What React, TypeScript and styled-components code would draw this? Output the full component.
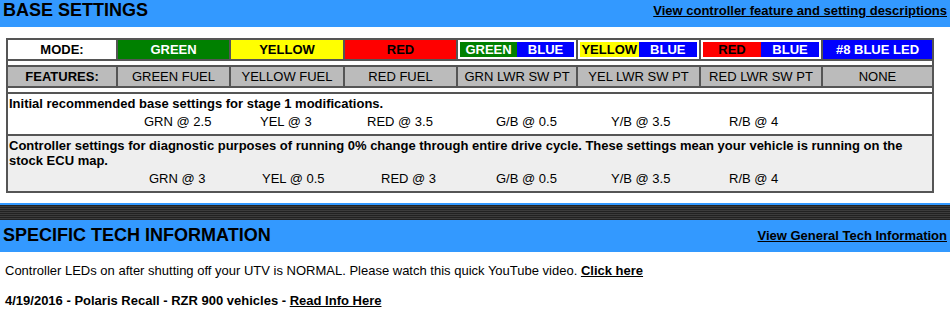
import styled, { createGlobalStyle } from 'styled-components';

const GlobalStyle = createGlobalStyle`
  body {
    margin: 0;
    background: #fff;
    color: #000;
    font-family: 'Liberation Sans', Arial, sans-serif;
    font-size: 13px;
  }
`;

const modes = [
  { label: 'GREEN', bg: '#008000', fg: '#fff' },
  { label: 'YELLOW', bg: '#ffff00', fg: '#000' },
  { label: 'RED', bg: '#ff0000', fg: '#000' },
];

const features = [
  'GREEN FUEL',
  'YELLOW FUEL',
  'RED FUEL',
  'GRN LWR SW PT',
  'YEL LWR SW PT',
  'RED LWR SW PT',
  'NONE',
];

const presets = [
  {
    text: 'Initial recommended base settings for stage 1 modifications.',
    bg: '#fff',
    indent: 135,
    cols: '116px 107px 129px 115px 118px auto',
    values: ['GRN @ 2.5', 'YEL @ 3', 'RED @ 3.5', 'G/B @ 0.5', 'Y/B @ 3.5', 'R/B @ 4'],
  },
  {
    text: 'Controller settings for diagnostic purposes of running 0% change through entire drive cycle. These settings mean your vehicle is running on the stock ECU map.',
    bg: '#eeeeee',
    indent: 140,
    cols: '113px 119px 115px 115px 118px auto',
    values: ['GRN @ 3', 'YEL @ 0.5', 'RED @ 3', 'G/B @ 0.5', 'Y/B @ 3.5', 'R/B @ 4'],
  },
];

function App() {
  return (
    <>
      <GlobalStyle />
      <Bar $height={27} $top={0}>
        <Title>BASE SETTINGS</Title>
        <BarLink href="#">View controller feature and setting descriptions</BarLink>
      </Bar>

      <Table>
        <Cell $bold>MODE:</Cell>
        {modes.map((m) => (
          <Cell key={m.label} $bg={m.bg} $fg={m.fg} $bold>
            {m.label}
          </Cell>
        ))}
        {/* two-colour modes: solid half plus blue half */}
        {modes.map((c) => (
          <Cell key={c.label + '-blue'} $bg="#fff" $bold $inset>
            <Split>
              <Half $bg={c.bg} $fg={c.fg}>{c.label}</Half>
              <Half $bg="#0000ff" $fg="#fff">BLUE</Half>
            </Split>
          </Cell>
        ))}
        <Cell $bg="#0000ff" $fg="#fff" $bold>#8 BLUE LED</Cell>

        <Spacer />

        <Cell $bg="#bbbbbb" $bold>FEATURES:</Cell>
        {features.map((f) => (
          <Cell key={f} $bg="#bbbbbb">{f}</Cell>
        ))}

        <Spacer />

        {presets.map((p) => (
          <Note key={p.text} $bg={p.bg}>
            <NoteTitle>{p.text}</NoteTitle>
            <Values $indent={p.indent} $cols={p.cols}>
              {p.values.map((v) => (
                <span key={v}>{v}</span>
              ))}
            </Values>
          </Note>
        ))}
      </Table>

      <Stripe />

      <Bar $height={32} $top={5}>
        <Title>SPECIFIC TECH INFORMATION</Title>
        <BarLink href="#">View General Tech Information</BarLink>
      </Bar>

      <Para>
        Controller LEDs on after shutting off your UTV is NORMAL. Please watch this quick
        YouTube video. <InlineLink href="#">Click here</InlineLink>
      </Para>
      <Para $bold $gap={15}>
        4/19/2016 - Polaris Recall - RZR 900 vehicles - <InlineLink href="#">Read Info Here</InlineLink>
      </Para>
    </>
  );
}

const Bar = styled.div<{ $height: number; $top: number }>`
  display: flex;
  justify-content: space-between;
  align-items: flex-start;
  box-sizing: border-box;
  height: ${(p) => p.$height}px;
  padding: ${(p) => p.$top}px 3px 0 3px;
  background: #3399ff;
`;

const Title = styled.h2`
  margin: 0;
  font-size: 18px;
  line-height: 20px;
  font-weight: bold;
`;

const BarLink = styled.a`
  margin-top: 3px;
  font-size: 13px;
  line-height: 15px;
  font-weight: bold;
  color: #000;
  text-decoration: underline;
`;

const Table = styled.div`
  display: grid;
  grid-template-columns: 110px 113px 114px 113px 120px 123px 122px 111px;
  box-sizing: border-box;
  width: 928px;
  margin: 11px 0 0 6px;
  border: 1px solid #555;
  background: #fff;
`;

const Cell = styled.div<{ $bg?: string; $fg?: string; $bold?: boolean; $inset?: boolean }>`
  border: 1px solid #555;
  padding: 2px ${(p) => (p.$inset ? 2 : 1)}px;
  background: ${(p) => p.$bg ?? '#fff'};
  color: ${(p) => p.$fg ?? '#000'};
  font-weight: ${(p) => (p.$bold ? 'bold' : 'normal')};
  line-height: 15px;
  text-align: center;
  white-space: nowrap;
`;

const Split = styled.div`
  display: flex;
`;

const Half = styled.div<{ $bg: string; $fg: string }>`
  flex: 1;
  background: ${(p) => p.$bg};
  color: ${(p) => p.$fg};
  text-align: center;
`;

const Spacer = styled.div`
  grid-column: 1 / -1;
  height: 4px;
  border: 1px solid #555;
`;

const Note = styled.div<{ $bg: string }>`
  grid-column: 1 / -1;
  border: 1px solid #555;
  padding: 2px 1px 5px;
  background: ${(p) => p.$bg};
  line-height: 15px;
`;

const NoteTitle = styled.div`
  font-weight: bold;
`;

const Values = styled.div<{ $indent: number; $cols: string }>`
  display: grid;
  grid-template-columns: ${(p) => p.$cols};
  margin-top: 3px;
  padding-left: ${(p) => p.$indent}px;
  white-space: nowrap;
`;

const Stripe = styled.div`
  margin-top: 10px;
  height: 15px;
  border-top: 2px solid #3399ff;
  background: repeating-linear-gradient(to bottom, #222 0 1px, #3c3c3c 1px 2px);
`;

const Para = styled.p<{ $bold?: boolean; $gap?: number }>`
  margin: ${(p) => p.$gap ?? 11}px 0 0;
  padding: 0 5px;
  line-height: 15px;
  font-weight: ${(p) => (p.$bold ? 'bold' : 'normal')};
`;

const InlineLink = styled.a`
  font-weight: bold;
  color: #000;
  text-decoration: underline;
`;

export default App;
